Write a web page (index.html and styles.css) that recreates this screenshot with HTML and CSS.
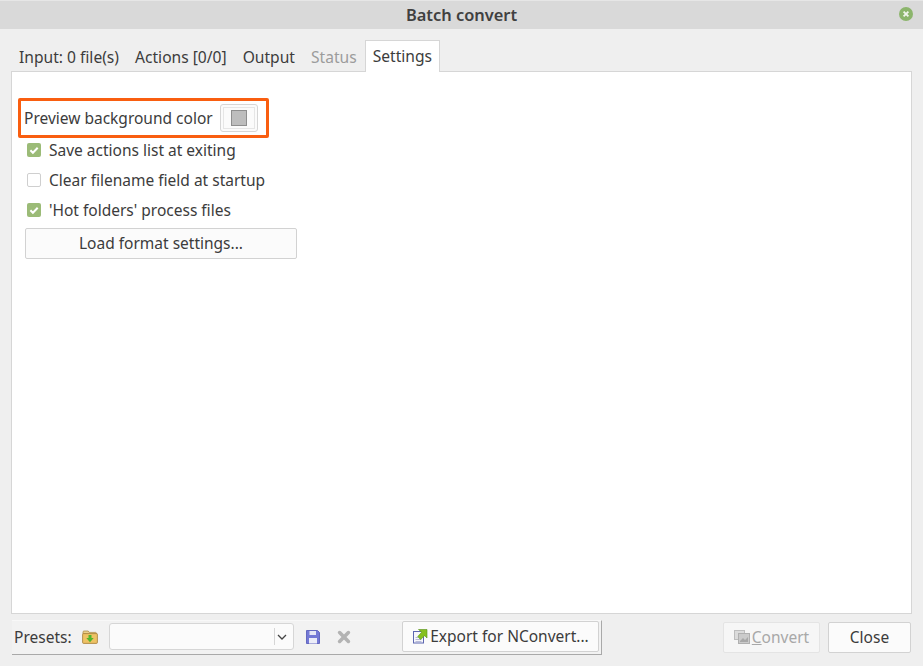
FILE: index.html
```html
<!DOCTYPE html>
<html lang="en">
<head>
<meta charset="utf-8">
<title>Batch convert</title>
<link rel="stylesheet" href="styles.css">
</head>
<body>
<div class="window">
  <header class="titlebar">
    <span class="title">Batch convert</span>
    <svg class="win-close" viewBox="0 0 14 14" width="14" height="14"><circle cx="7" cy="7" r="7" fill="#8cb56c"/><path d="M4.600 4.600l4.800 4.800M9.400 4.600l-4.800 4.800" stroke="#f1f5ec" stroke-width="1.800"/></svg>
  </header>
  <nav class="tabs">
    <span class="tab">Input: 0 file(s)</span>
    <span class="tab">Actions [0/0]</span>
    <span class="tab">Output</span>
    <span class="tab tab-disabled">Status</span>
    <span class="tab tab-active">Settings</span>
  </nav>
  <main class="pane">
    <div class="color-row">
      <span>Preview background color</span>
      <span class="color-btn"><span class="color-inner"><span class="swatch"></span></span></span>
    </div>
    <label class="check-row"><span class="check on"><svg viewBox="0 0 14 14" width="14" height="14"><path d="M3.400 7.200l2.500 2.500 4.800-5" fill="none" stroke="#fff" stroke-width="2"/></svg></span>Save actions list at exiting</label>
    <label class="check-row"><span class="check"></span>Clear filename field at startup</label>
    <label class="check-row"><span class="check on"><svg viewBox="0 0 14 14" width="14" height="14"><path d="M3.400 7.200l2.500 2.500 4.800-5" fill="none" stroke="#fff" stroke-width="2"/></svg></span>'Hot folders' process files</label>
    <button class="btn load-btn">Load format settings...</button>
  </main>
  <footer class="bottom">
    <div class="toolbar">
      <span class="presets-label">Presets:</span>
      <svg class="icon folder" viewBox="0 0 16 14" width="16" height="14"><path d="M1 4V1.600L1.800 1h4.400l1 1.400h6.600l.9.800V5z" fill="#e8cf8e" stroke="#a8823a" stroke-width=".7"/><rect x=".6" y="3.600" width="14.800" height="9.800" rx="1" fill="#eec264" stroke="#a57c34" stroke-width=".8"/><path d="M6.500 5h3v3h2.200L8 12.300 4.300 8h2.200z" fill="#52b52c"/></svg>
      <span class="combo"><span class="combo-field"></span><svg class="chev" viewBox="0 0 10 6" width="10" height="6"><path d="M1 1l4 4 4-4" fill="none" stroke="#444" stroke-width="1.300"/></svg></span>
      <svg class="icon save" viewBox="0 0 14 14" width="14" height="14"><path d="M.5.5h11l2 2v11H.5z" fill="#7479d6" stroke="#6469c0"/><rect x="3.500" y="1" width="6.500" height="4" fill="#e6e7f6"/><rect x="3" y="8" width="8" height="5.500" fill="#ecedf8"/></svg>
      <svg class="icon del" viewBox="0 0 14 14" width="14" height="14"><path d="M2.600 2.600l8.800 8.800M11.400 2.600l-8.800 8.800" stroke="#b3b3b3" stroke-width="3.600" stroke-linecap="round"/></svg>
      <button class="btn export-btn"><svg class="icon" viewBox="0 0 16 16" width="16" height="16"><rect x="1.500" y="3.500" width="10" height="11.500" fill="#f7f7fb" stroke="#5d67b0"/><path d="M3.500 9.500h3M3.500 11.500h6M3.500 13.500h6" stroke="#b8bcd8"/><path d="M6.500 1.500H15V10L12.700 7.700 8.500 11.500 5.800 8.500 9.700 4.200z" fill="#86c01e" stroke="#55901a" stroke-width=".6"/></svg>Export for NConvert...</button>
    </div>
    <div class="actions">
      <button class="btn convert-btn" disabled><svg class="icon" viewBox="0 0 16 14" width="16" height="14"><rect x=".5" y=".5" width="10" height="9" fill="#d2d2d2" stroke="#aaa"/><rect x="4.500" y="3.500" width="11" height="10" fill="#bdbdbd" stroke="#999"/><path d="M6 11l3-3 2 2 3-3v5H6z" fill="#8f8f8f"/></svg><span><u>C</u>onvert</span></button>
      <button class="btn close-btn">Close</button>
    </div>
  </footer>
</div>
</body>
</html>
```
FILE: styles.css
```css
* { box-sizing: border-box; }
html, body { margin: 0; height: 100%; }
body {
  background: #efefef;
  color: #3c3c3c;
  font-family: "Noto Sans", "Open Sans", sans-serif;
  font-size: 15.5px;
}
.window { width: 923px; height: 666px; display: flex; flex-direction: column; overflow: hidden; }
.titlebar {
  height: 29px;
  flex: none;
  background: #d9d9d9;
  border-top: 1px solid #e6e6e6;
  display: flex;
  align-items: center;
  justify-content: center;
  position: relative;
}
.title { font-weight: 600; font-size: 16.4px; color: #404040; margin-bottom: 1px; }
.win-close { position: absolute; right: 10px; top: 6px; }
.tabs { display: flex; height: 32px; margin: 11px 0 0 11px; flex: none; position: relative; z-index: 1; font-size: 15.6px; }
.tab { padding: 0 8px; display: flex; align-items: center; height: 31px; margin-top: 1px; }
.tab-disabled { color: #9c9c9c; }
.tab-active {
  background: #fff;
  border: 1px solid #d6d6d6;
  border-bottom: 0;
  height: 32px;
  margin-top: 0;
  padding: 0 7px 2px;
}
.pane {
  flex: none;
  height: 543px;
  margin: -1px 11px 0;
  background: #fff;
  border: 1px solid #d6d6d6;
  padding: 26px 0 0 6px;
  display: flex;
  flex-direction: column;
  align-items: flex-start;
}
.color-row {
  width: 251px;
  height: 40px;
  border: 3px solid #f95e10;
  border-radius: 2px;
  display: flex;
  align-items: center;
  padding-left: 3px;
  gap: 7px;
}
.color-btn {
  width: 38px;
  height: 28px;
  background: #fbfbfb;
  border: 1px solid #d6d6d6;
  border-radius: 3px;
  padding: 2px;
  display: flex;
}
.color-inner {
  flex: 1;
  border: 1px solid #e6e6e6;
  display: flex;
  align-items: center;
  justify-content: center;
}
.swatch { width: 16px; height: 16px; background: #bdbdbd; border: 1px solid #8e8e8e; }
.check-row { display: flex; align-items: center; height: 24px; margin-bottom: 6px; padding-left: 9px; gap: 8px; }
.check {
  width: 14px;
  height: 14px;
  border: 1px solid #cfcfcf;
  border-radius: 2px;
  background: #fff;
  flex: none;
  display: flex;
  position: relative;
}
.check.on { background: #9bbb77; border: 0; }
.btn {
  font: inherit;
  color: inherit;
  background: #fbfbfb;
  border: 1px solid #d2d2d2;
  border-radius: 2px;
  padding: 0 0 2px;
  display: flex;
  align-items: center;
  justify-content: center;
}
.load-btn { width: 272px; height: 31px; margin-left: 7px; }
.bottom { flex: 1; display: flex; justify-content: space-between; padding: 6px 12px 0 12px; align-items: flex-start; }
.toolbar {
  width: 590px;
  height: 35px;
  display: flex;
  align-items: center;
  background: #f2f2f2;
  border-top: 1px solid #f8f8f8;
  border-right: 1px solid #a9a9a9;
  border-bottom: 1px solid #a9a9a9;
  padding: 0 0 2px 2px;
}
.presets-label { width: 68px; flex: none; }
.icon { flex: none; display: block; }
.combo {
  width: 185px;
  height: 27px;
  margin-left: 11px;
  background: #fbfbfb;
  border: 1px solid #d6d6d6;
  border-radius: 3px;
  display: flex;
  align-items: center;
}
.combo-field { flex: 1; height: 17px; border-right: 1px solid #d6d6d6; }
.chev { margin: 0 6px 0 2px; }
.save { margin-left: 12px; }
.del { margin-left: 17px; }
.export-btn { width: 197px; height: 31px; margin-left: 51px; gap: 2px; }
.actions { display: flex; gap: 8px; margin-top: 2px; }
.convert-btn { width: 97px; height: 31px; color: #a8a8a8; gap: 2px; border-color: #e4e4e4; background: #f6f6f6; }
.convert-btn .icon { opacity: .75; }
.close-btn { width: 83px; height: 31px; }
```
